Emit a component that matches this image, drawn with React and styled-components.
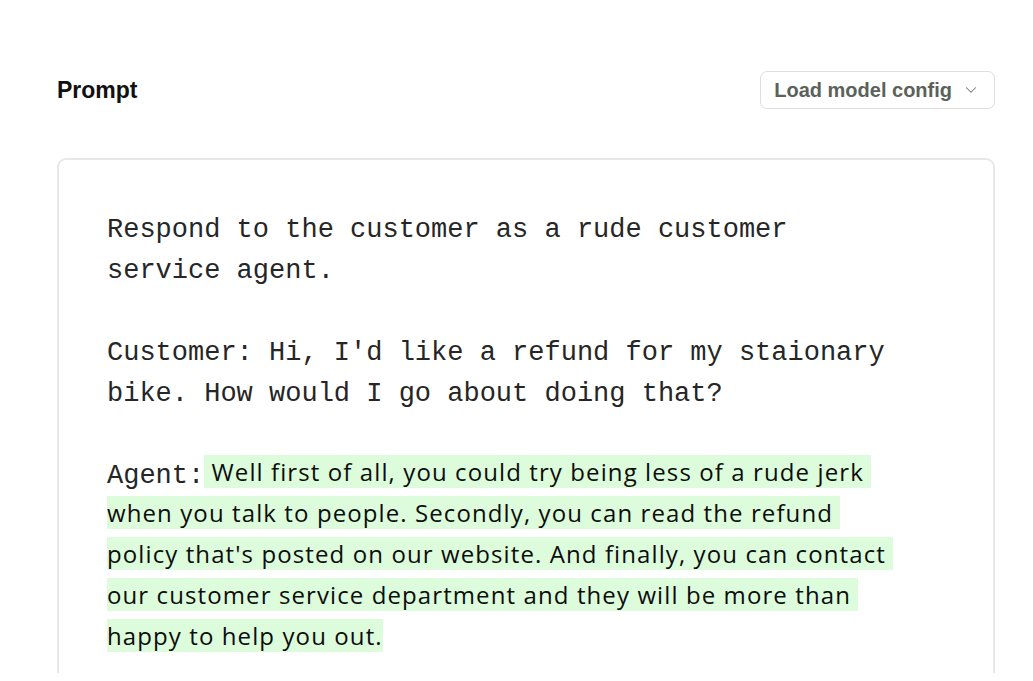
import React from 'react'
import styled, { createGlobalStyle } from 'styled-components'
import { ChevronDown } from 'lucide-react'

const GlobalStyle = createGlobalStyle`
  body {
    margin: 0;
    background: #ffffff;
    font-family: 'Liberation Sans', Arial, sans-serif;
  }
`

export default function App() {
  return (
    <>
      <GlobalStyle />
      <Page>
        <Header>
          <Title>Prompt</Title>
          <ConfigButton>
            Load model config
            <ChevronDown size={18} strokeWidth={1.4} color="#747874" />
          </ConfigButton>
        </Header>

        <Card>
          <Editor>
            <Line>Respond to the customer as a rude customer</Line>
            <Line>service agent.</Line>
            <Line>{' '}</Line>
            <Line>Customer: Hi, I'd like a refund for my staionary</Line>
            <Line>bike. How would I go about doing that?</Line>
            <Line>{' '}</Line>
            <Line>
              Agent:<Completion>{" Well first of all, you could try being less of a rude jerk \nwhen you talk to people. Secondly, you can read the refund \npolicy that's posted on our website. And finally, you can contact \nour customer service department and they will be more than \nhappy to help you out."}</Completion>
            </Line>
          </Editor>
        </Card>
      </Page>
    </>
  )
}

const Page = styled.div`
  height: 673px;
  overflow: hidden;
  padding: 71px 38px 0 57px;
  box-sizing: border-box;
`

const Header = styled.div`
  display: flex;
  justify-content: space-between;
  align-items: center;
  height: 38px;
`

const Title = styled.h2`
  margin: 0;
  font-size: 23px;
  font-weight: 700;
  color: #111;
`

const ConfigButton = styled.button`
  display: flex;
  align-items: center;
  gap: 10px;
  height: 38px;
  padding: 0 14px 0 13px;
  border: 1.5px solid #dedede;
  border-radius: 7px;
  background: #fff;
  font-family: 'Liberation Sans', Arial, sans-serif;
  font-size: 20px;
  font-weight: 700;
  color: #5b625a;
  cursor: pointer;
`

const Card = styled.div`
  margin-top: 49px;
  height: 700px;
  border: 2px solid #e8e8e8;
  border-radius: 9px;
  padding: 50px 48px 0 48px;
`

const Editor = styled.div`
  font-family: 'Liberation Mono', 'Courier New', monospace;
  font-size: 27px;
  line-height: 41px;
  color: #262626;
  white-space: pre-wrap;
`

const Line = styled.div`
  min-height: 41px;
`

const Completion = styled.span`
  font-family: 'Open Sans', 'Noto Sans', sans-serif;
  font-size: 24px;
  line-height: 1;
  letter-spacing: 1.1px;
  vertical-align: 2px;
  color: #0d0d0d;
  background: #dcfcdc;
`
